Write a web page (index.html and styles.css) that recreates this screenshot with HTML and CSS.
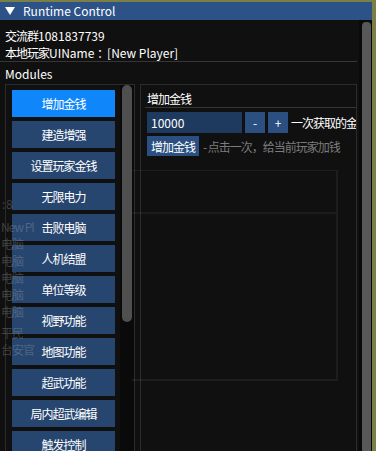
FILE: index.html
```html
<!DOCTYPE html>
<html lang="zh-CN">
<head>
    <meta charset="UTF-8">
    <meta name="viewport" content="width=device-width, initial-scale=1.0">
    <title>Runtime Control</title>
    <link rel="stylesheet" href="styles.css">
</head>
<body>
    <div class="window">
        <div class="title-bar">
            <span class="collapse-arrow"></span>
            <span class="title">Runtime Control</span>
        </div>
        <div class="window-body">
            <div class="content">
                <div class="line"><span class="cjk">交流群</span>1081837739</div>
                <div class="line"><span class="cjk">本地玩家</span>UIName <span class="colon">：</span>[New Player]</div>
                <div class="separator"></div>
                <div class="line label">Modules</div>

                <div class="panels">
                    <div class="module-list">
                        <div class="module-buttons">
                            <button class="module-btn active">增加金钱</button>
                            <button class="module-btn">建造增强</button>
                            <button class="module-btn">设置玩家金钱</button>
                            <button class="module-btn">无限电力</button>
                            <button class="module-btn">击败电脑</button>
                            <button class="module-btn">人机结盟</button>
                            <button class="module-btn">单位等级</button>
                            <button class="module-btn">视野功能</button>
                            <button class="module-btn">地图功能</button>
                            <button class="module-btn">超武功能</button>
                            <button class="module-btn">局内超武编辑</button>
                            <button class="module-btn">触发控制</button>
                        </div>
                        <div class="scrollbar list-scroll"><div class="thumb"></div></div>
                    </div>

                    <div class="module-detail">
                        <div class="detail-title">增加金钱</div>
                        <div class="separator detail-sep"></div>
                        <div class="row">
                            <div class="input">10000</div>
                            <button class="small-btn step">-</button>
                            <button class="small-btn step">+</button>
                            <span class="row-label">一次获取的金额</span>
                        </div>
                        <div class="row">
                            <button class="small-btn">增加金钱</button>
                            <span class="hint">- 点击一次，给当前玩家加钱</span>
                        </div>
                    </div>
                </div>
            </div>
            <div class="scrollbar window-scroll"><div class="thumb"></div></div>
        </div>
    </div>

    <!-- game ui showing through the transparent window -->
    <div class="ghost">
        <div class="ghost-column">
            <span class="ghost-first">: 8</span>
            <span class="ghost-gap">New Pl</span>
            <span>电脑</span>
            <span>电脑</span>
            <span>电脑</span>
            <span>电脑</span>
            <span>电脑</span>
            <span class="ghost-gap-sm">平民</span>
            <span>台安官</span>
        </div>
        <div class="ghost-frame"><div class="ghost-frame-head"></div></div>
    </div>
</body>
</html>
```

FILE: styles.css
```css
* {
    margin: 0;
    padding: 0;
    box-sizing: border-box;
}

body {
    height: 451px;
    padding-top: 2px;
    background: #7a7f48;
    font-family: "Noto Sans CJK SC", sans-serif;
    font-size: 12px;
    color: #fff;
    overflow: hidden;
    position: relative;
}

.window {
    width: 372px;
    height: 449px;
    background: #101010;
    display: flex;
    flex-direction: column;
    overflow: hidden;
}

.title-bar {
    height: 18px;
    flex-shrink: 0;
    display: flex;
    align-items: center;
    gap: 8px;
    padding-left: 5px;
    background: #2d5288;
}

.collapse-arrow {
    width: 0;
    height: 0;
    border-left: 5px solid transparent;
    border-right: 5px solid transparent;
    border-top: 8px solid #fff;
}

.title {
    font-size: 12px;
    line-height: 18px;
}

.window-body {
    flex: 1;
    display: flex;
    min-height: 0;
}

.content {
    flex: 1;
    min-width: 0;
    padding: 7px 2px 0 5px;
}

.line {
    height: 17px;
    line-height: 17px;
    white-space: nowrap;
}

.cjk {
    letter-spacing: -1px;
}

.colon {
    font-family: "Noto Sans CJK TC", sans-serif;
    letter-spacing: -2px;
}

.separator {
    height: 1px;
    background: #363636;
    margin: 0 0 3px -5px;
}

.label {
    margin-bottom: 2px;
}

.panels {
    display: flex;
    gap: 5px;
    height: 380px;
}

.module-list {
    width: 130px;
    flex-shrink: 0;
    display: flex;
    gap: 5px;
    padding-left: 6px;
    border: 1px solid #2c2c2c;
    overflow: hidden;
}

.module-buttons {
    width: 103px;
    padding-top: 5px;
    display: flex;
    flex-direction: column;
    gap: 4px;
}

.module-btn {
    height: 27px;
    flex-shrink: 0;
    border: none;
    background: #27466f;
    color: #fff;
    font-family: inherit;
    font-size: 12px;
    letter-spacing: -1px;
}

.module-btn.active {
    background: #0f87fa;
}

.scrollbar {
    background: #0a0a0a;
}

.list-scroll {
    width: 14px;
    padding: 0 2px;
}

.thumb {
    background: #4f4f4f;
    border-radius: 5px;
    height: 100%;
}

.list-scroll .thumb {
    height: 237px;
}

.window-scroll {
    width: 13px;
    flex-shrink: 0;
    padding: 2px 1px 0 3px;
}

.window-scroll .thumb {
    background: #585858;
    border-radius: 4px 4px 0 0;
}

.module-detail {
    flex: 1;
    min-width: 0;
    padding: 5px 6px 0;
    border: 1px solid #2c2c2c;
    overflow: hidden;
}

.detail-title {
    height: 17px;
    line-height: 17px;
    letter-spacing: -1px;
}

.detail-sep {
    margin: 0 -8px 4px -2px;
}

.row {
    display: flex;
    align-items: center;
    gap: 3px;
    height: 21px;
    margin-bottom: 3px;
    white-space: nowrap;
}

.row + .row {
    height: 20px;
}

.input {
    width: 95px;
    height: 21px;
    line-height: 21px;
    padding-left: 4px;
    background: #1f3a5f;
    flex-shrink: 0;
}

.small-btn {
    height: 100%;
    padding: 0 4px;
    border: none;
    background: #2a4f80;
    color: #fff;
    font-family: inherit;
    font-size: 12px;
    letter-spacing: -1px;
    flex-shrink: 0;
}

.small-btn.step {
    width: 20px;
    padding: 0;
    letter-spacing: 0;
}

.row-label {
    letter-spacing: -1px;
}

.hint {
    margin-left: 1px;
    color: #7c7c7c;
    letter-spacing: -1px;
}

/* faint game ui behind the window */
.ghost {
    position: absolute;
    inset: 0;
    pointer-events: none;
    color: rgba(170, 170, 170, 0.32);
    font-size: 12px;
}

.ghost-column {
    position: absolute;
    left: 1px;
    top: 195px;
    display: flex;
    flex-direction: column;
    line-height: 17px;
    letter-spacing: -1px;
}

.ghost-first {
    padding-left: 1px;
}

.ghost-gap {
    margin-top: 6px;
}

.ghost-gap-sm {
    margin-top: 4px;
}

.ghost-frame {
    position: absolute;
    left: 132px;
    top: 170px;
    width: 206px;
    height: 211px;
    border-top: 1px solid rgba(255, 255, 255, 0.05);
    border-right: 2px solid rgba(255, 255, 255, 0.05);
    border-bottom: 2px solid rgba(255, 255, 255, 0.06);
}

.ghost-frame-head {
    height: 43px;
    border-bottom: 2px solid rgba(255, 255, 255, 0.05);
}
```
